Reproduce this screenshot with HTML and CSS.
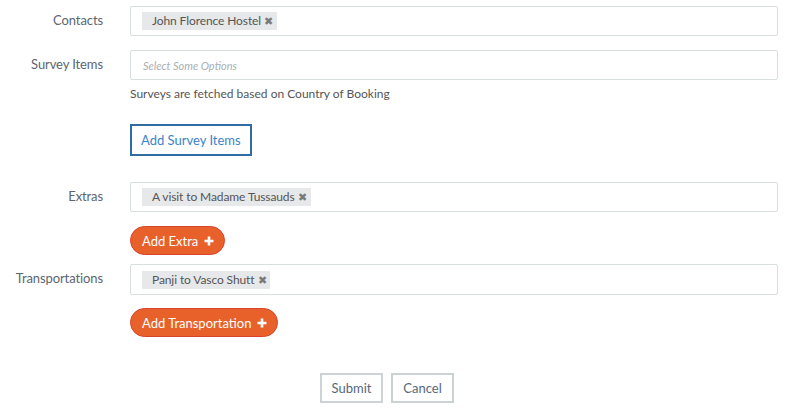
FILE: index.html
```html
<!DOCTYPE html>
<html>
<head>
<meta charset="utf-8">
<link rel="stylesheet" href="styles.css">
</head>
<body>
<form class="form">
  <div class="row r-contacts">
    <label class="label">Contacts</label>
    <div class="field">
      <span class="tag">John Florence Hostel <span class="x">&#10006;</span></span>
    </div>
  </div>
  <div class="row r-survey">
    <label class="label">Survey Items</label>
    <div class="col">
      <div class="field"><span class="placeholder">Select Some Options</span></div>
      <p class="help">Surveys are fetched based on Country of Booking</p>
      <div><button type="button" class="btn-outline">Add Survey Items</button></div>
    </div>
  </div>
  <div class="row r-extras">
    <label class="label">Extras</label>
    <div class="col">
      <div class="field">
        <span class="tag">A visit to Madame Tussauds <span class="x">&#10006;</span></span>
      </div>
      <div><button type="button" class="btn-orange">Add Extra <svg class="plus" viewBox="0 0 10 10" width="10" height="10"><path d="M5 0.5v9M0.5 5h9" stroke="#fff" stroke-width="2.6"/></svg></button></div>
    </div>
  </div>
  <div class="row r-trans">
    <label class="label">Transportations</label>
    <div class="col">
      <div class="field">
        <span class="tag">Panji to Vasco Shutt <span class="x">&#10006;</span></span>
      </div>
      <div><button type="button" class="btn-orange">Add Transportation <svg class="plus" viewBox="0 0 10 10" width="10" height="10"><path d="M5 0.5v9M0.5 5h9" stroke="#fff" stroke-width="2.6"/></svg></button></div>
    </div>
  </div>
  <div class="actions">
    <button type="button" class="btn-plain">Submit</button>
    <button type="button" class="btn-plain">Cancel</button>
  </div>
</form>
</body>
</html>
```
FILE: styles.css
```css
html, body { margin: 0; padding: 0; background: #fff; }
body { font-family: Lato, "Open Sans", sans-serif; color: #555; font-size: 13px; }
.form { padding: 6px 9px 0 0; width: 778px; }
.row { display: grid; grid-template-columns: 103px 648px; column-gap: 27px; }
.label { text-align: right; color: #5b6670; font-size: 13px; line-height: 16px; padding-top: 6px; letter-spacing: -0.1px; }
.col { display: flex; flex-direction: column; }
.field { box-sizing: border-box; height: 30px; border: 1px solid #d9dedf; border-radius: 2px; display: flex; align-items: center; padding-left: 11px; }
.tag { background: #e6e8ea; height: 18px; line-height: 18px; padding: 0 4px 0 10px; font-size: 12px; color: #555; display: inline-flex; align-items: center; letter-spacing: -0.1px; }
.x { font-size: 11px; color: #7a7a7a; margin-left: 3px; }
.placeholder { font-style: italic; color: #aab0b4; font-size: 11px; padding-left: 1px; }
.r-contacts { margin-bottom: 14px; }
.help { margin: 6px 0 0; font-size: 12px; line-height: 16px; color: #555; }
.btn-outline { margin-top: 22px; height: 32px; box-sizing: border-box; border: 2px solid #2e6ca2; background: #fff; color: #3b83c6; font-family: inherit; font-size: 13px; padding: 0 9px; border-radius: 0; }
.r-extras { margin-top: 26px; }
.r-extras .field { margin-bottom: 14px; }
.btn-orange { height: 29px; box-sizing: border-box; border: 1px solid #d8432e; background: #e8612a; color: #fff; border-radius: 15px; font-family: inherit; font-size: 13px; padding: 0 10px 0 11px; display: inline-flex; align-items: center; }
.plus { margin-left: 6px; }
.r-trans { margin-top: 9px; }
.r-trans .field { height: 31px; margin-bottom: 13px; }
.actions { display: flex; justify-content: center; gap: 8px; margin-top: 36px; width: 774px; }
.btn-plain { height: 30px; width: 63px; box-sizing: border-box; border: 2px solid #cdd2d5; background: #fff; color: #56687a; font-family: inherit; font-size: 13px; padding: 0; border-radius: 0; }
```
